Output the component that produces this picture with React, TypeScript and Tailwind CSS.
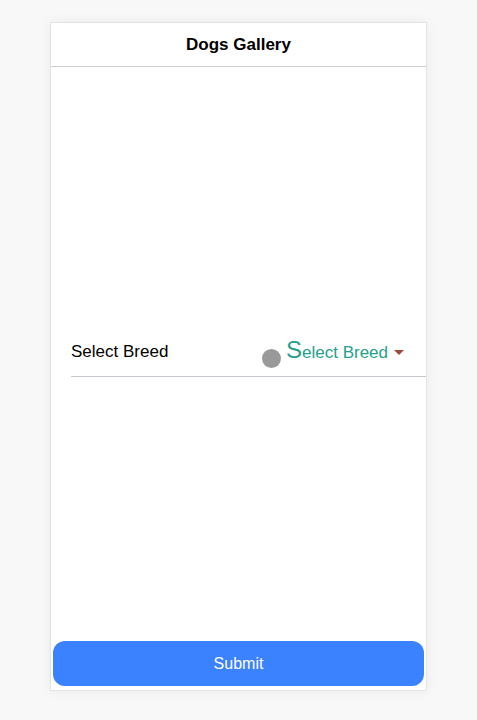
import React, { useState } from "react";

const App: React.FC = () => {
  const [breed] = useState("Select Breed");

  return (
    <div
      className="min-h-screen bg-[#f8f8f8] pt-[22px] pb-[30px]"
      style={{ fontFamily: '"Liberation Sans", Arial, sans-serif' }}
    >
      <div className="ml-[50px] w-[377px] h-[669px] bg-white border border-[#e4e4e4] shadow-[0_0_12px_rgba(0,0,0,0.06)] flex flex-col">
        {/* Header */}
        <div className="h-[44px] shrink-0 flex items-center justify-center border-b border-[#cfcfcf]">
          <h1 className="text-[17px] font-bold text-black">Dogs Gallery</h1>
        </div>

        {/* Body */}
        <div className="flex-1 flex flex-col justify-center pl-[20px] pb-[4px]">
          <div className="flex items-center justify-between h-[50px] border-b border-[#c8c8d0] pr-[22px]">
            <span className="text-[17px] text-black">Select Breed</span>
            <div className="flex items-center mt-[-4px]">
              <span className="w-[19px] h-[19px] rounded-full bg-[#999999] mr-[5px] translate-y-[9px]" />
              <span className="text-[#26a08a] text-[17px] leading-none">
                <span className="text-[24px]">{breed.charAt(0)}</span>
                {breed.slice(1)}
              </span>
              <svg width="10" height="6" viewBox="0 0 10 6" className="ml-[6px] mt-[7px]">
                <path d="M0 0 L10 0 L5 5 Z" fill="#a04a3a" />
              </svg>
            </div>
          </div>
        </div>

        {/* Submit */}
        <div className="px-[2px] pb-[4px]">
          <button className="w-full h-[45px] rounded-[12px] bg-[#3a82ff] text-white text-[16px]">
            Submit
          </button>
        </div>
      </div>
    </div>
  );
};

export default App;
